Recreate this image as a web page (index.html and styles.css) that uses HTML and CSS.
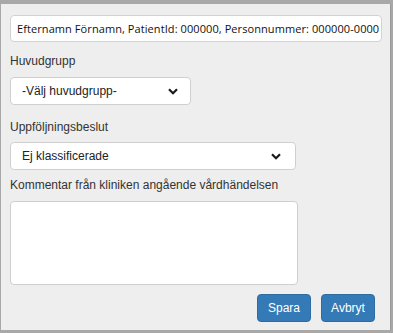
FILE: index.html
```html
<!DOCTYPE html>
<html lang="sv">
<head>
<meta charset="utf-8">
<link rel="stylesheet" href="styles.css">
</head>
<body>
<div class="backdrop">
  <div class="dialog">
    <div class="patient">Efternamn Förnamn, PatientId: 000000, Personnummer: 000000-0000</div>
    <label class="label l1">Huvudgrupp</label>
    <div class="select s1">
      <span>-Välj huvudgrupp-</span>
      <svg class="chev" width="10" height="7" viewBox="0 0 10 7"><path d="M1 1.2 L5 5.2 L9 1.2" fill="none" stroke="#1a1a1a" stroke-width="2.2"/></svg>
    </div>
    <label class="label l2">Uppföljningsbeslut</label>
    <div class="select s2">
      <span>Ej klassificerade</span>
      <svg class="chev" width="10" height="7" viewBox="0 0 10 7"><path d="M1 1.2 L5 5.2 L9 1.2" fill="none" stroke="#1a1a1a" stroke-width="2.2"/></svg>
    </div>
    <label class="label l3">Kommentar från kliniken angående vårdhändelsen</label>
    <div class="textarea"></div>
    <div class="buttons">
      <button class="btn">Spara</button>
      <button class="btn">Avbryt</button>
    </div>
  </div>
  <div class="rightedge"></div>
</div>
</body>
</html>
```
FILE: styles.css
```css
html, body { margin: 0; padding: 0; }
body {
  background: #a8a8a8;
  width: 393px;
  height: 333px;
  overflow: hidden;
  font-family: "Liberation Sans", Arial, sans-serif;
  color: #333;
}
.backdrop {
  display: flex;
  padding-top: 4px;
  padding-left: 1px;
}
.dialog {
  box-sizing: border-box;
  width: 389px;
  height: 326px;
  background: #eeeeee;
  padding: 11px 0 0 9px;
  display: flex;
  flex-direction: column;
  align-items: flex-start;
}
.rightedge {
  width: 1px;
  height: 326px;
  background: #9a9a9a;
}
.patient {
  box-sizing: border-box;
  width: 372px;
  height: 27px;
  background: #fff;
  border: 1px solid #d2d2d2;
  border-radius: 4px;
  padding-left: 6px;
  font-family: "Open Sans", "Noto Sans", sans-serif;
  font-size: 11px;
  letter-spacing: 0.08px;
  line-height: 25px;
  color: #111;
  white-space: nowrap;
  overflow: hidden;
}
.label {
  display: block;
  font-size: 12px;
  line-height: 16px;
  color: #333;
}
.l1 { margin-top: 11px; }
.l2 { margin-top: 14px; }
.l3 { margin-top: 7px; }
.select {
  box-sizing: border-box;
  height: 28px;
  background: #fff;
  border: 1px solid #cfcfcf;
  border-radius: 4px;
  display: flex;
  align-items: center;
  justify-content: space-between;
  padding: 0 12px 0 11px;
  font-size: 12px;
  color: #222;
}
.s1 { width: 181px; margin-top: 8px; }
.s2 { width: 286px; margin-top: 7px; padding-right: 14px; }
.chev { display: block; margin-top: 1px; }
.textarea {
  box-sizing: border-box;
  width: 288px;
  height: 84px;
  margin-top: 8px;
  background: #fff;
  border: 1px solid #cfcfcf;
  border-radius: 4px;
}
.buttons {
  align-self: stretch;
  display: flex;
  justify-content: flex-end;
  gap: 10px;
  margin-top: 9px;
  padding-right: 15px;
}
.btn {
  box-sizing: border-box;
  width: 54px;
  height: 28px;
  background: #337ab7;
  border: 1px solid #2e6da4;
  border-radius: 4px;
  color: #fff;
  font-family: "Liberation Sans", Arial, sans-serif;
  font-size: 12px;
  padding: 0;
}
```
